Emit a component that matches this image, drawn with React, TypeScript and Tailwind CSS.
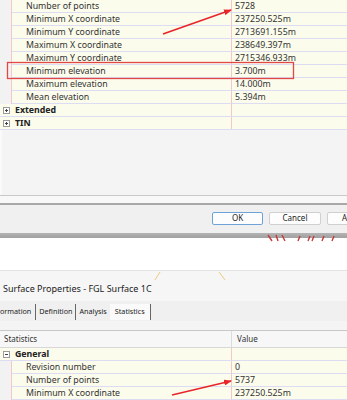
const font = { fontFamily: '"Noto Sans", "Open Sans", sans-serif' };

type Row = { name: string; value?: string; group?: boolean; open?: boolean };

const topRows: Row[] = [
  { name: 'Number of points', value: '5728' },
  { name: 'Minimum X coordinate', value: '237250.525m' },
  { name: 'Minimum Y coordinate', value: '2713691.155m' },
  { name: 'Maximum X coordinate', value: '238649.397m' },
  { name: 'Maximum Y coordinate', value: '2715346.933m' },
  { name: 'Minimum elevation', value: '3.700m' },
  { name: 'Maximum elevation', value: '14.000m' },
  { name: 'Mean elevation', value: '5.394m' },
  { name: 'Extended', group: true },
  { name: 'TIN', group: true },
];

const bottomRows: Row[] = [
  { name: 'General', group: true, open: true },
  { name: 'Revision number', value: '0' },
  { name: 'Number of points', value: '5737' },
  { name: 'Minimum X coordinate', value: '237250.525m' },
];

function Box({ open }: { open?: boolean }) {
  return (
    <span className="flex h-[7px] w-[7px] items-center justify-center border border-[#9a9a9a] bg-white">
      <span className="relative block h-[1px] w-[3px] bg-[#444]">
        {!open && <span className="absolute left-[1px] top-[-1px] block h-[3px] w-[1px] bg-[#444]" />}
      </span>
    </span>
  );
}

function GridRow({ row }: { row: Row }) {
  if (row.group) {
    return (
      <div className="flex h-[13px] border-b border-[#dcdcf2] bg-[#fcfcec]">
        <div className="flex w-[12px] items-center justify-center pl-[1px]">
          <Box open={row.open} />
        </div>
        <div className="flex w-[220px] items-center border-r border-[#f2c8ce] pl-[3px] font-bold text-[#222]">
          {row.name}
        </div>
        <div className="flex-1" />
      </div>
    );
  }
  return (
    <div className="flex h-[13px]">
      <div className="w-[12px] border-r border-[#f2c8ce] bg-[#f2f2f2]" />
      <div className="flex w-[220px] items-center border-b border-r border-[#dcdcf2] border-r-[#f2c8ce] bg-[#fcfcec] pl-[14px] text-[#333]">
        {row.name}
      </div>
      <div className="flex flex-1 items-center border-b border-[#dcdcf2] bg-[#fcfcec] pl-[3px] text-[#333]">
        {row.value}
      </div>
    </div>
  );
}

export default function App() {
  return (
    <div className="relative h-[400px] w-[347px] overflow-hidden bg-white text-[8.8px] leading-none" style={font}>
      {/* top dialog: grid */}
      <div className="flex flex-col">
        {topRows.map((r) => (
          <GridRow key={r.name} row={r} />
        ))}
      </div>
      <div className="h-[65px] border-l-[2px] border-[#fafafa] bg-[#f4f4f4]" />
      <div className="h-[8px] border-t border-[#c8c8c8] bg-[#f8f8f8]" />
      <div className="flex h-[30px] items-center justify-end gap-[6px] border-t-[2px] border-[#a8a8a8] bg-[#f0f0f0] pb-[2px]">
        <button className="h-[13px] w-[51px] rounded-[2px] border border-[#6fa3d8] bg-[#fdfdfd] text-[8px] text-[#222]">OK</button>
        <button className="h-[13px] w-[52px] rounded-[2px] border border-[#d0d0d0] bg-[#fdfdfd] text-[8px] text-[#222]">Cancel</button>
        <button className="mr-[-32px] h-[13px] w-[52px] rounded-[2px] border border-[#d0d0d0] bg-[#fdfdfd] pl-[14px] text-left text-[8px] text-[#222]">A</button>
      </div>
      <div className="h-[5px] bg-gradient-to-b from-[#b4b4b4] to-[#a0a0a0]" />

      {/* gap between screenshots */}
      <div className="h-[32px] bg-white" />

      {/* bottom dialog */}
      <div className="border-t border-[#e4e4e4] bg-[#f6f6f6]">
        <div className="flex h-[30px] items-center pl-[3px] pt-[5px] text-[9px] text-[#222]">Surface Properties - FGL Surface 1C</div>
        <div className="flex h-[20px] items-start bg-[#f0f0f0] pt-[3px] text-[7.2px] text-[#222]">
          <div className="flex h-[16px] items-center border-r border-[#666] pr-[4px]">ormation</div>
          <div className="flex h-[16px] items-center border-r border-[#666] px-[3px]">Definition</div>
          <div className="flex h-[16px] items-center px-[3px]">Analysis</div>
          <div className="flex h-[16px] items-center border-r border-[#666] bg-[#fafafa] px-[5px]">Statistics</div>
        </div>
        <div className="h-[10px] border-b border-[#c8c8c8] bg-[#f4f4f4]" />
        <div className="flex h-[17px] border-b border-[#d8d8d8] bg-[#f7f7f7] text-[8px] text-[#333]">
          <div className="flex w-[232px] items-center border-r border-[#dcdcdc] pl-[4px]">Statistics</div>
          <div className="flex flex-1 items-center pl-[5px]">Value</div>
        </div>
        <div className="flex flex-col">
          {bottomRows.map((r) => (
            <GridRow key={r.name} row={r} />
          ))}
        </div>
      </div>

      {/* annotations */}
      <svg className="pointer-events-none absolute left-0 top-0" width="347" height="400" viewBox="0 0 347 400">
        <defs>
          <marker id="ah" markerWidth="8" markerHeight="6" refX="7" refY="3" orient="auto" markerUnits="userSpaceOnUse">
            <path d="M0,0 L8,3 L0,6 Z" fill="#e8262a" />
          </marker>
        </defs>
        <line x1="163" y1="34" x2="231" y2="10" stroke="#e8262a" strokeWidth="1.6" markerEnd="url(#ah)" />
        <rect x="7.5" y="62.5" width="286" height="16" fill="none" stroke="#e04848" strokeWidth="1.3" />
        <line x1="172" y1="395" x2="231" y2="381" stroke="#e8262a" strokeWidth="1.6" markerEnd="url(#ah)" />
        <path d="M268 235 l4 6 M276 235 l2 6 M282 235 l3 6 M300 236 l-2 5 M310 236 l-2 5 M314 236 l-2 5 M324 236 l-2 5 M334 236 l-2 5" stroke="#c8383a" strokeWidth="1.4" />
        <path d="M155 280 L160 272 M219 272 L225 280" stroke="#e8c060" strokeWidth="0.8" />
      </svg>
    </div>
  );
}
